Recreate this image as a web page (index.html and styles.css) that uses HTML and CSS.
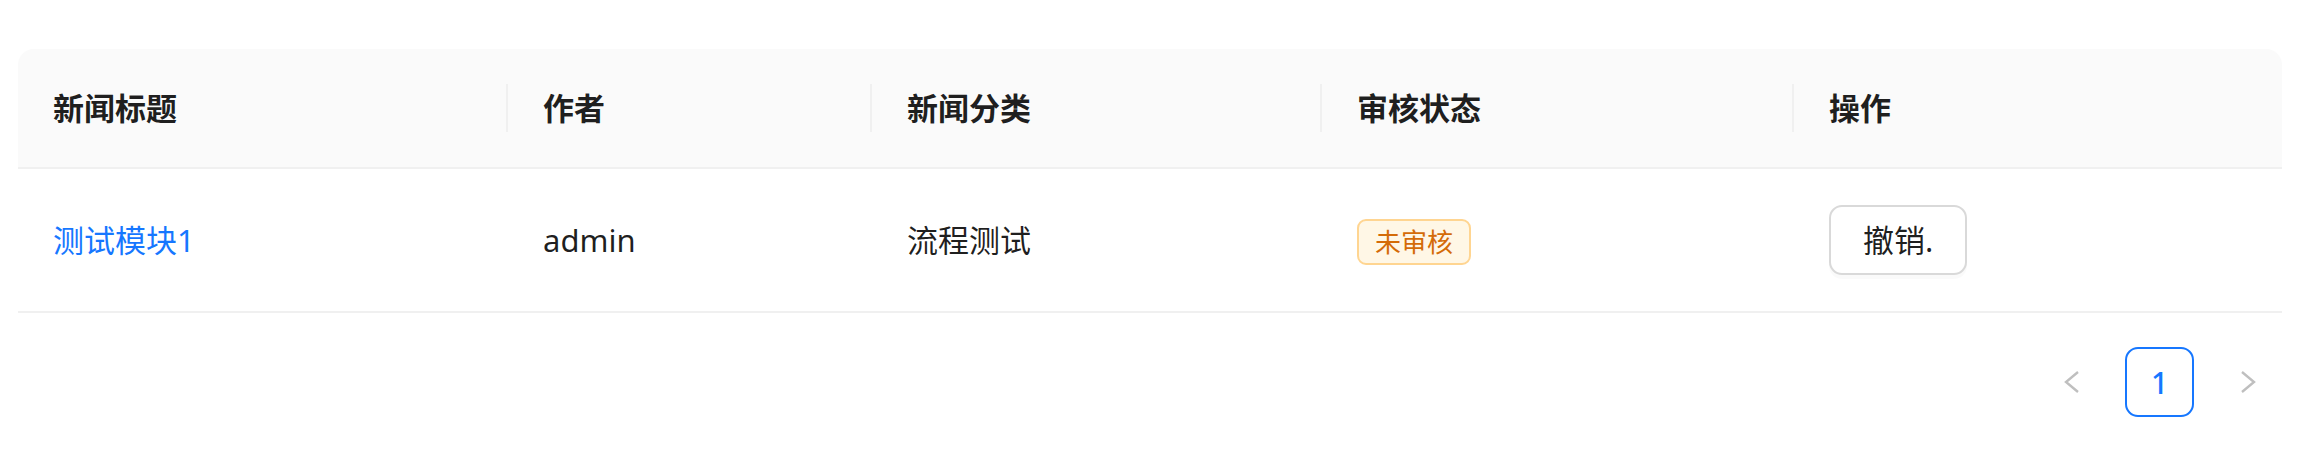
FILE: index.html
```html
<!DOCTYPE html>
<html lang="zh">
<head>
  <meta charset="UTF-8">
  <title>新闻审核</title>
  <link rel="stylesheet" href="styles.css">
</head>
<body>
  <div class="page">
    <table class="news-table">
      <colgroup>
        <col class="c-title">
        <col class="c-author">
        <col class="c-cat">
        <col class="c-state">
        <col class="c-op">
      </colgroup>
      <thead>
        <tr>
          <th>新闻标题</th>
          <th>作者</th>
          <th>新闻分类</th>
          <th>审核状态</th>
          <th>操作</th>
        </tr>
      </thead>
      <tbody>
        <tr>
          <td><a class="link" href="#">测试模块1</a></td>
          <td>admin</td>
          <td>流程测试</td>
          <td><span class="tag">未审核</span></td>
          <td><button class="btn">撤销.</button></td>
        </tr>
      </tbody>
    </table>

    <ul class="pager">
      <li class="pager-item disabled">
        <svg width="16" height="22" viewBox="0 0 16 22"><polyline points="14,1 2,11 14,21" fill="none" stroke="currentColor" stroke-width="2.4"/></svg>
      </li>
      <li class="pager-item active">1</li>
      <li class="pager-item disabled">
        <svg width="16" height="22" viewBox="0 0 16 22"><polyline points="2,1 14,11 2,21" fill="none" stroke="currentColor" stroke-width="2.4"/></svg>
      </li>
    </ul>
  </div>
</body>
</html>
```

FILE: styles.css
```css
body { margin: 0; background: #fff; font-family: "Noto Sans", "Noto Sans CJK SC", sans-serif; color: rgba(0, 0, 0, 0.88); }
.page { padding: 49px 36px 0 18px; }

.news-table { width: 2264px; table-layout: fixed; border-collapse: separate; border-spacing: 0; font-size: 31px; line-height: 47px; }
.c-title { width: 490px; }
.c-author { width: 364px; }
.c-cat { width: 450px; }
.c-state { width: 472px; }
.c-op { width: 488px; }

.news-table th { position: relative; text-align: left; font-weight: 700; background: #fafafa; padding: 36px 35px 35px; border-bottom: 2px solid #f0f0f0; }
.news-table th:first-child { border-top-left-radius: 16px; }
.news-table th:last-child { border-top-right-radius: 16px; }
.news-table th:not(:last-child)::before { content: ""; position: absolute; right: 0; top: 50%; width: 2px; height: 48px; transform: translateY(-50%); background: #f0f0f0; }

.news-table td { padding: 36px 35px; border-bottom: 2px solid #f0f0f0; height: 70px; }
.link { color: #1677ff; text-decoration: none; }

.tag { display: inline-block; padding: 0 16px; font-size: 26px; line-height: 42px; color: #d46b08; background: #fff7e6; border: 2px solid #ffd591; border-radius: 9px; vertical-align: middle; }

.btn { height: 70px; padding: 0 32px; font: inherit; font-size: 31px; color: rgba(0, 0, 0, 0.88); background: #fff; border: 2px solid #d9d9d9; border-radius: 13px; box-shadow: 0 4px 0 rgba(0, 0, 0, 0.02); cursor: pointer; }

.pager { list-style: none; margin: 34px 0 0; padding: 0; display: flex; justify-content: flex-end; gap: 19px; width: 2264px; }
.pager-item { width: 69px; height: 70px; box-sizing: border-box; display: flex; align-items: center; justify-content: center; font-size: 30px; border-radius: 13px; }
.pager-item.disabled { color: #bfbfbf; }
.pager-item.active { border: 2px solid #1677ff; color: #1677ff; font-weight: 500; }
```
